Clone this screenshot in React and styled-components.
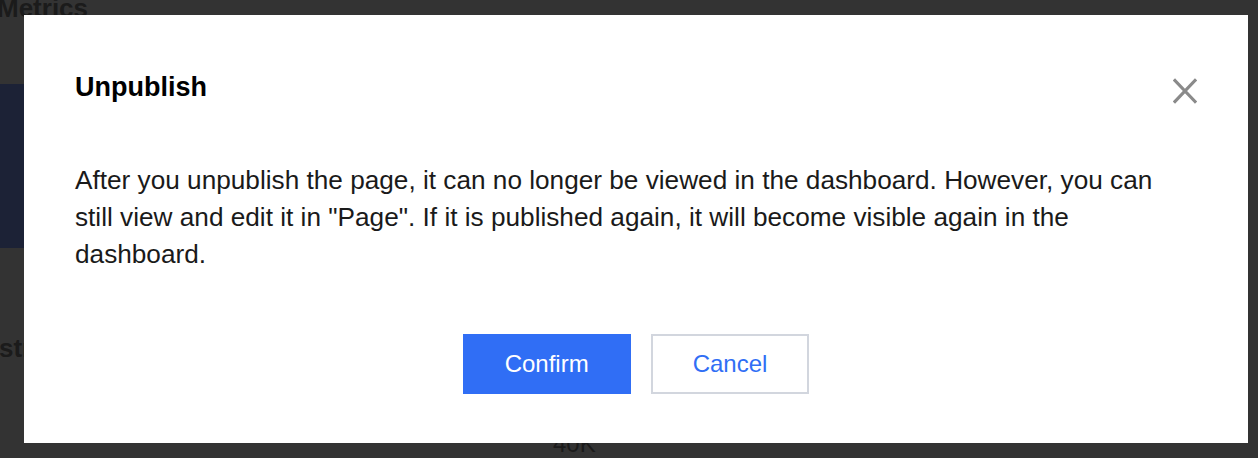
import React from "react";
import styled, { createGlobalStyle } from "styled-components";

const GlobalStyle = createGlobalStyle`
  html, body {
    margin: 0;
    padding: 0;
    background: #808080;
    font-family: "Liberation Sans", Arial, Helvetica, sans-serif;
  }
  * { box-sizing: border-box; }
`;

const Page = styled.div`
  width: 1258px;
  height: 458px;
  overflow: hidden;
  background: #808080;
  display: flex;
  flex-direction: column;
`;

const PageHeading = styled.h2`
  margin: -8px 0 0 -3px;
  font-size: 26px;
  line-height: 32px;
  font-weight: 700;
  color: #444;
`;

const DarkCard = styled.div`
  margin-top: 60px;
  width: 640px;
  height: 178px;
  background: #465587;
`;

const SectionHeading = styled.h3`
  margin: 84px 0 0 -27px;
  font-size: 26px;
  line-height: 32px;
  font-weight: 700;
  color: #444;
`;

const AxisLabel = styled.div`
  margin: 66px 0 0 553px;
  font-size: 24px;
  line-height: 28px;
  color: #444;
`;

const Mask = styled.div`
  position: fixed;
  inset: 0;
  background: rgba(0, 0, 0, 0.6);
`;

const DialogLayer = styled.div`
  position: fixed;
  inset: 0;
  padding: 15px 10px 15px 24px;
  display: flex;
  align-items: flex-start;
`;

const Dialog = styled.div`
  width: 1224px;
  height: 428px;
  background: #fff;
  padding: 56px 51px 49px 51px;
  display: flex;
  flex-direction: column;
`;

const Header = styled.div`
  display: flex;
  align-items: flex-start;
  justify-content: space-between;
`;

const Title = styled.h1`
  margin: 0;
  font-size: 27px;
  line-height: 32px;
  font-weight: 700;
  color: #000;
`;

const CloseButton = styled.button`
  margin-top: 7px;
  padding: 0;
  border: 0;
  background: transparent;
  width: 24px;
  height: 26px;
  display: flex;
  align-items: center;
  justify-content: center;
  cursor: pointer;
`;

const Body = styled.p`
  margin: 58px 0 0 0;
  max-width: 1100px;
  font-size: 26.2px;
  line-height: 37px;
  color: #1a1a1a;
`;

const Footer = styled.div`
  margin-top: auto;
  display: flex;
  justify-content: center;
  gap: 20px;
`;

const Button = styled.button`
  height: 60px;
  padding: 0 40px;
  border: 2px solid ${(p) => (p.$primary ? "#306ef5" : "#d2d6de")};
  background: ${(p) => (p.$primary ? "#306ef5" : "#fff")};
  color: ${(p) => (p.$primary ? "#fff" : "#306ef5")};
  font-family: inherit;
  font-size: 24px;
  cursor: pointer;
`;

export default function App() {
  return (
    <>
      <GlobalStyle />
      <Page>
        <PageHeading>Metrics</PageHeading>
        <DarkCard />
        <SectionHeading>Distribution</SectionHeading>
        <AxisLabel>40K</AxisLabel>
      </Page>
      <Mask />
      <DialogLayer>
        <Dialog role="dialog" aria-labelledby="dlg-title">
          <Header>
            <Title id="dlg-title">Unpublish</Title>
            <CloseButton aria-label="Close">
              <svg width="24" height="26" viewBox="0 0 24 26">
                <path
                  d="M2 2.5 L22 23.5 M22 2.5 L2 23.5"
                  stroke="#8a8a8a"
                  strokeWidth="3.2"
                  strokeLinecap="square"
                  fill="none"
                />
              </svg>
            </CloseButton>
          </Header>
          <Body>
            After you unpublish the page, it can no longer be viewed in the
            dashboard. However, you can still view and edit it in "Page". If it
            is published again, it will become visible again in the dashboard.
          </Body>
          <Footer>
            <Button $primary>Confirm</Button>
            <Button>Cancel</Button>
          </Footer>
        </Dialog>
      </DialogLayer>
    </>
  );
}
